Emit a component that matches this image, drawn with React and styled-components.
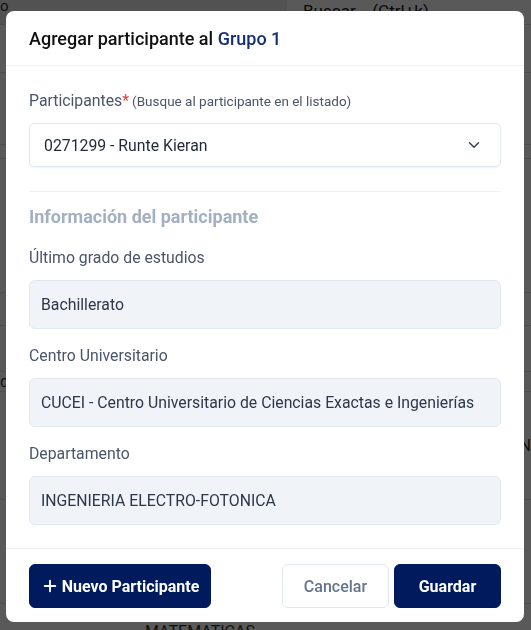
import React from "react";
import styled, { createGlobalStyle } from "styled-components";
import { ChevronDown, Plus } from "lucide-react";

const Global = createGlobalStyle`
  html, body { margin: 0; padding: 0; overflow: hidden; }
  body { font-family: Roboto, "Noto Sans", Arial, sans-serif; background: #ffffff; }
  * { box-sizing: border-box; }
`;

const Page = styled.div`
  width: 531px;
  height: 630px;
  display: flex;
  flex-direction: column;
  background: #ffffff;
  color: #333;
  overflow: hidden;
`;

const TopBar = styled.div`
  height: 25px;
  flex-shrink: 0;
  display: flex;
  align-items: stretch;
  border-bottom: 1px solid #d9d9d9;
`;

const TopLeft = styled.div`
  width: 287px;
  font-size: 15px;
  line-height: 12px;
  background: #ececec;
`;

const SearchArea = styled.div`
  flex: 1;
  padding-left: 16px;
  font-size: 17px;
  color: #222;
  line-height: 22px;
`;

const Row = styled.div`
  height: ${(p) => p.$h}px;
  flex-shrink: 0;
  display: flex;
  align-items: center;
  justify-content: ${(p) => (p.$right ? "flex-end" : "flex-start")};
  padding-left: ${(p) => p.$pl || 0}px;
  border-bottom: 1px solid #dcdcdc;
  font-size: 16px;
  color: #333;
  overflow: hidden;
  white-space: nowrap;
`;

const Overlay = styled.div`
  position: fixed;
  inset: 0;
  background: rgba(0, 0, 0, 0.65);
`;

const Modal = styled.div`
  position: fixed;
  top: 11px;
  left: 6px;
  width: 518px;
  background: #ffffff;
  border-radius: 8px;
  display: flex;
  flex-direction: column;
  overflow: hidden;
`;

const Header = styled.div`
  height: 55px;
  padding: 0 23px;
  display: flex;
  align-items: center;
  border-bottom: 1px solid #edf0f4;
`;

const Title = styled.h2`
  margin: 0;
  font-size: 18px;
  font-weight: 500;
  color: #111111;
`;

const Accent = styled.span`
  color: #152f75;
`;

const Body = styled.div`
  padding: 23px 23px 23px;
  display: flex;
  flex-direction: column;
`;

const Label = styled.div`
  font-size: 15.8px;
  line-height: 24px;
  color: #4a5568;
  margin-top: ${(p) => p.$mt || 0}px;
  margin-bottom: 10px;
  white-space: nowrap;
`;

const Star = styled.span`
  color: #e53e3e;
`;

const Hint = styled.span`
  font-size: 13.5px;
  margin-left: 3px;
`;

const Select = styled.div`
  height: 44px;
  border: 1px solid #e2e8f0;
  border-radius: 5px;
  box-shadow: 0 1px 2px rgba(0, 0, 0, 0.06);
  display: flex;
  align-items: center;
  justify-content: space-between;
  padding: 0 17px 0 14px;
  font-size: 15.8px;
  color: #1f2937;
`;

const Divider = styled.hr`
  margin: 24px 0 0;
  border: 0;
  border-top: 1px solid #edf0f4;
`;

const SectionTitle = styled.h3`
  margin: 11px 0 0;
  font-size: 18px;
  line-height: 28px;
  font-weight: 700;
  color: #a3b0c2;
`;

const ReadBox = styled.div`
  height: 49px;
  background: #f0f3f8;
  border: 1px solid #e2e8f0;
  border-radius: 6px;
  display: flex;
  align-items: center;
  padding: 0 11px;
  font-size: 15.8px;
  color: #2d3748;
  white-space: nowrap;
`;

const Footer = styled.div`
  border-top: 1px solid #edf0f4;
  padding: 15px 23px 14px;
  display: flex;
  justify-content: space-between;
  align-items: center;
`;

const Actions = styled.div`
  display: flex;
  gap: 5px;
`;

const Button = styled.button`
  height: 44px;
  width: ${(p) => p.$w}px;
  padding: 0;
  border-radius: 6px;
  font-family: Roboto, "Noto Sans", Arial, sans-serif;
  font-size: 16px;
  font-weight: ${(p) => (p.$variant === "ghost" ? 500 : 700)};
  display: flex;
  align-items: center;
  justify-content: center;
  gap: 3px;
  white-space: nowrap;
  cursor: pointer;
  background: ${(p) => (p.$variant === "ghost" ? "#ffffff" : "#001a5e")};
  color: ${(p) => (p.$variant === "ghost" ? "#64748b" : "#ffffff")};
  border: 1px solid ${(p) => (p.$variant === "ghost" ? "#e2e8f0" : "#001a5e")};
`;

const ButtonLabel = styled.span`
  display: inline-block;
`;

export default function App() {
  return (
    <>
      <Global />
      <Page>
        <TopBar>
          <TopLeft>o</TopLeft>
          <SearchArea>Buscar... (Ctrl+k)</SearchArea>
        </TopBar>
        <Row $h={48} />
        <Row $h={72} />
        <Row $h={14} />
        <Row $h={134} />
        <Row $h={33} />
        <Row $h={46} />
        <Row $h={20}>d</Row>
        <Row $h={108} $right>N</Row>
        <Row $h={104} />
        <Row $h={56} $pl={145}>MATEMATICAS</Row>
      </Page>
      <Overlay />
      <Modal role="dialog">
        <Header>
          <Title>
            Agregar participante al <Accent>Grupo 1</Accent>
          </Title>
        </Header>
        <Body>
          <Label>
            Participantes<Star>*</Star>
            <Hint>(Busque al participante en el listado)</Hint>
          </Label>
          <Select>
            <span>0271299 - Runte Kieran</span>
            <ChevronDown size={18} strokeWidth={2} color="#374151" />
          </Select>
          <Divider />
          <SectionTitle>Información del participante</SectionTitle>
          <Label $mt={15}>Último grado de estudios</Label>
          <ReadBox>Bachillerato</ReadBox>
          <Label $mt={15}>Centro Universitario</Label>
          <ReadBox>CUCEI - Centro Universitario de Ciencias Exactas e Ingenierías</ReadBox>
          <Label $mt={15}>Departamento</Label>
          <ReadBox>INGENIERIA ELECTRO-FOTONICA</ReadBox>
        </Body>
        <Footer>
          <Button $w={182}>
            <Plus size={18} strokeWidth={2.5} />
            <ButtonLabel>Nuevo Participante</ButtonLabel>
          </Button>
          <Actions>
            <Button $variant="ghost" $w={107}>Cancelar</Button>
            <Button $w={107}>Guardar</Button>
          </Actions>
        </Footer>
      </Modal>
    </>
  );
}
